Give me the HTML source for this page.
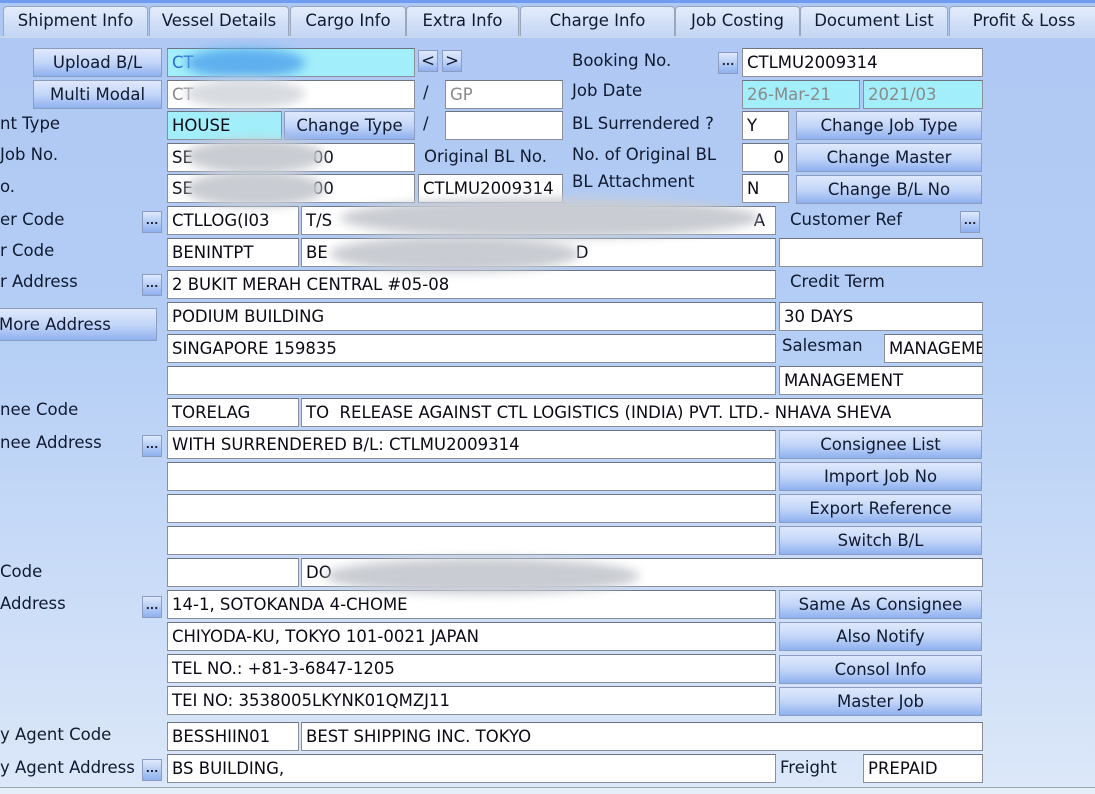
<!DOCTYPE html>
<html><head><meta charset="utf-8"><style>
*{box-sizing:border-box;margin:0;padding:0}
body{width:1095px;height:794px;overflow:hidden;position:relative;font-family:"DejaVu Sans","Liberation Sans",sans-serif;font-size:16.5px;color:#101a30;background:linear-gradient(#aec8f4 0%,#b3cdf5 40%,#d2e1f8 85%,#dce8f9 100%)}
.a{position:absolute;white-space:nowrap;overflow:hidden}
.f{position:absolute;background:#fff;border:1px solid #8a8f99;border-top-color:#6d7380;height:29px;line-height:28px;padding-left:4px;white-space:nowrap;overflow:hidden;color:#0a0a14}
.c{background:#a2eefa}
.g{color:#8a8a8a}
.b{position:absolute;border:1px solid #8c9cc0;background:linear-gradient(#dfe9fc,#c3d6f8 50%,#8fb1f0);height:29px;line-height:27px;text-align:center;white-space:nowrap;color:#101a30}
.l{position:absolute;white-space:nowrap;line-height:20px}
.d{position:absolute;width:20px;height:22px;border:1px solid #8c9cc0;background:linear-gradient(#dfe9fc,#8fb1f0);font-size:11px;text-align:center;line-height:18px;font-weight:bold;color:#223}
.t{position:absolute;top:6px;height:30px;border:1px solid #9aa6bb;border-bottom:none;border-radius:4px 4px 0 0;background:linear-gradient(#e3ecfb,#c4d6f4);text-align:center;line-height:28px;white-space:nowrap;font-size:16.5px}
.bl{position:absolute;background:#c9ccd2;border-radius:50%;filter:blur(5px)}
</style></head><body>
<div class="a" style="left:0;top:0;width:1095px;height:3px;background:#6f9bf0"></div>
<div class="a" style="left:0;top:36px;width:1095px;height:2px;background:#c8d6ee"></div>
<div class="t" style="left:3px;width:145px">Shipment Info</div>
<div class="t" style="left:149px;width:140px">Vessel Details</div>
<div class="t" style="left:290px;width:116px">Cargo Info</div>
<div class="t" style="left:406px;width:113px">Extra Info</div>
<div class="t" style="left:520px;width:155px">Charge Info</div>
<div class="t" style="left:675px;width:125px">Job Costing</div>
<div class="t" style="left:800px;width:148px">Document List</div>
<div class="t" style="left:949px;width:150px">Profit &amp; Loss</div>

<div class="b" style="left:33px;top:48px;width:129px">Upload B/L</div>
<div class="f c" style="left:167px;top:48px;width:248px;color:#2a6fd8">CT</div>
<div class="b" style="left:418px;top:50px;width:20px;height:22px;line-height:20px">&lt;</div>
<div class="b" style="left:442px;top:50px;width:20px;height:22px;line-height:20px">&gt;</div>
<div class="l" style="left:572px;top:51px">Booking No.</div>
<div class="d" style="left:718px;top:52px">...</div>
<div class="f" style="left:742px;top:48px;width:241px">CTLMU2009314</div>

<div class="b" style="left:33px;top:80px;width:129px">Multi Modal</div>
<div class="f g" style="left:167px;top:80px;width:248px">CT</div>
<div class="l" style="left:423px;top:83px">/</div>
<div class="f g" style="left:445px;top:80px;width:118px">GP</div>
<div class="l" style="left:572px;top:81px">Job Date</div>
<div class="f c g" style="left:742px;top:80px;width:118px">26-Mar-21</div>
<div class="f c g" style="left:863px;top:80px;width:120px">2021/03</div>

<div class="l" style="left:0;top:114px">nt Type</div>
<div class="f c" style="left:167px;top:111px;width:115px">HOUSE</div>
<div class="b" style="left:284px;top:111px;width:131px">Change Type</div>
<div class="l" style="left:423px;top:114px">/</div>
<div class="f" style="left:445px;top:111px;width:118px"></div>
<div class="l" style="left:572px;top:114px">BL Surrendered ?</div>
<div class="f" style="left:742px;top:111px;width:47px">Y</div>
<div class="b" style="left:796px;top:111px;width:186px">Change Job Type</div>

<div class="l" style="left:0;top:145px">Job No.</div>
<div class="f" style="left:167px;top:143px;width:248px">SE<span style="margin-left:120px">00</span></div>
<div class="l" style="left:424px;top:147px">Original BL No.</div>
<div class="l" style="left:572px;top:145px">No. of Original BL</div>
<div class="f" style="left:742px;top:143px;width:47px;text-align:right;padding-right:4px">0</div>
<div class="b" style="left:796px;top:143px;width:186px">Change Master</div>

<div class="l" style="left:0;top:177px">o.</div>
<div class="f" style="left:167px;top:174px;width:248px">SE<span style="margin-left:120px">00</span></div>
<div class="f" style="left:418px;top:174px;width:145px">CTLMU2009314</div>
<div class="l" style="left:572px;top:172px">BL Attachment</div>
<div class="f" style="left:742px;top:174px;width:47px">N</div>
<div class="b" style="left:796px;top:175px;width:186px">Change B/L No</div>

<div class="l" style="left:0;top:210px">er Code</div>
<div class="d" style="left:142px;top:211px">...</div>
<div class="f" style="left:167px;top:206px;width:132px">CTLLOG(I03</div>
<div class="f" style="left:301px;top:206px;width:475px">T/S<span style="position:absolute;right:10px">A</span></div>
<div class="l" style="left:790px;top:210px">Customer Ref</div>
<div class="d" style="left:960px;top:211px">...</div>

<div class="l" style="left:0;top:241px">r Code</div>
<div class="f" style="left:167px;top:238px;width:132px">BENINTPT</div>
<div class="f" style="left:301px;top:238px;width:475px">BE<span style="margin-left:248px">D</span></div>
<div class="f" style="left:779px;top:238px;width:204px"></div>

<div class="l" style="left:0;top:272px">r Address</div>
<div class="d" style="left:142px;top:274px">...</div>
<div class="f" style="left:167px;top:270px;width:609px">2 BUKIT MERAH CENTRAL #05-08</div>
<div class="l" style="left:790px;top:272px">Credit Term</div>

<div class="b" style="left:-2px;top:308px;width:159px;height:33px;line-height:31px;text-align:left;padding-left:0">More Address</div>
<div class="f" style="left:167px;top:302px;width:609px">PODIUM BUILDING</div>
<div class="f" style="left:779px;top:302px;width:204px">30 DAYS</div>

<div class="f" style="left:167px;top:334px;width:609px">SINGAPORE 159835</div>
<div class="l" style="left:782px;top:336px">Salesman</div>
<div class="f" style="left:884px;top:334px;width:99px">MANAGEME</div>

<div class="f" style="left:167px;top:366px;width:609px"></div>
<div class="f" style="left:779px;top:366px;width:204px">MANAGEMENT</div>

<div class="l" style="left:0;top:400px">nee Code</div>
<div class="f" style="left:167px;top:398px;width:132px">TORELAG</div>
<div class="f" style="left:301px;top:398px;width:682px">TO&nbsp; RELEASE AGAINST CTL LOGISTICS (INDIA) PVT. LTD.- NHAVA SHEVA</div>

<div class="l" style="left:0;top:433px">nee Address</div>
<div class="d" style="left:142px;top:435px">...</div>
<div class="f" style="left:167px;top:430px;width:609px">WITH SURRENDERED B/L: CTLMU2009314</div>
<div class="b" style="left:779px;top:430px;width:203px">Consignee List</div>
<div class="f" style="left:167px;top:462px;width:609px"></div>
<div class="b" style="left:779px;top:462px;width:203px">Import Job No</div>
<div class="f" style="left:167px;top:494px;width:609px"></div>
<div class="b" style="left:779px;top:494px;width:203px">Export Reference</div>
<div class="f" style="left:167px;top:526px;width:609px"></div>
<div class="b" style="left:779px;top:526px;width:203px">Switch B/L</div>

<div class="l" style="left:0;top:562px">Code</div>
<div class="f" style="left:167px;top:558px;width:132px"></div>
<div class="f" style="left:301px;top:558px;width:682px">DO</div>
<div class="l" style="left:0;top:594px">Address</div>
<div class="d" style="left:142px;top:596px">...</div>
<div class="f" style="left:167px;top:590px;width:609px">14-1, SOTOKANDA 4-CHOME</div>
<div class="b" style="left:779px;top:590px;width:203px">Same As Consignee</div>
<div class="f" style="left:167px;top:622px;width:609px">CHIYODA-KU, TOKYO 101-0021 JAPAN</div>
<div class="b" style="left:779px;top:622px;width:203px">Also Notify</div>
<div class="f" style="left:167px;top:654px;width:609px">TEL NO.: +81-3-6847-1205</div>
<div class="b" style="left:779px;top:655px;width:203px">Consol Info</div>
<div class="f" style="left:167px;top:686px;width:609px">TEI NO: 3538005LKYNK01QMZJ11</div>
<div class="b" style="left:779px;top:687px;width:203px">Master Job</div>

<div class="l" style="left:0;top:725px">y Agent Code</div>
<div class="f" style="left:167px;top:722px;width:132px">BESSHIIN01</div>
<div class="f" style="left:301px;top:722px;width:682px">BEST SHIPPING INC. TOKYO</div>
<div class="l" style="left:0;top:758px">y Agent Address</div>
<div class="d" style="left:142px;top:759px">...</div>
<div class="f" style="left:167px;top:754px;width:609px">BS BUILDING,</div>
<div class="l" style="left:780px;top:758px">Freight</div>
<div class="f" style="left:863px;top:754px;width:120px">PREPAID</div>
<div class="a" style="left:0;top:787px;width:1095px;height:7px;background:#e6eefa;border-top:1px solid #9aa"></div>

<div class="bl" style="left:185px;top:48px;width:120px;height:30px;background:#5fb0ef"></div>
<div class="bl" style="left:185px;top:79px;width:120px;height:30px;background:#d8dbe0"></div>
<div class="bl" style="left:185px;top:139px;width:140px;height:34px"></div>
<div class="bl" style="left:185px;top:171px;width:140px;height:36px"></div>
<div class="bl" style="left:340px;top:198px;width:420px;height:40px"></div>
<div class="bl" style="left:330px;top:236px;width:250px;height:36px"></div>
<div class="bl" style="left:325px;top:558px;width:315px;height:36px"></div>
</body></html>
